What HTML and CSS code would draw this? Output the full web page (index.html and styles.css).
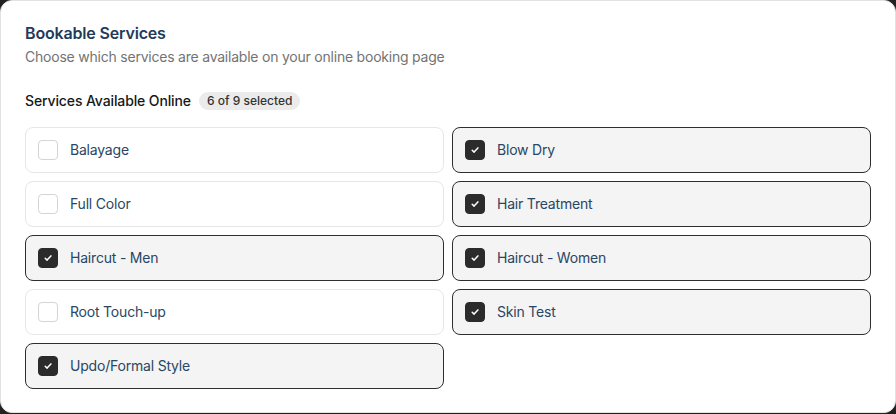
FILE: index.html
```html
<!DOCTYPE html>
<html lang="en">
<head>
<meta charset="utf-8">
<title>Bookable Services</title>
<link rel="stylesheet" href="styles.css">
</head>
<body>
<section class="card">
  <h2 class="title">Bookable Services</h2>
  <p class="subtitle">Choose which services are available on your online booking page</p>
  <div class="label-row">
    <span class="label">Services Available Online</span>
    <span class="badge">6 of 9 selected</span>
  </div>
  <div class="grid">
    <label class="item"><span class="box"></span><span class="name">Balayage</span></label>
    <label class="item on"><span class="box"><svg viewBox="0 0 12 12"><path d="M3.2 6.2l1.9 1.9 3.8-4.2"/></svg></span><span class="name">Blow Dry</span></label>
    <label class="item"><span class="box"></span><span class="name">Full Color</span></label>
    <label class="item on"><span class="box"><svg viewBox="0 0 12 12"><path d="M3.2 6.2l1.9 1.9 3.8-4.2"/></svg></span><span class="name">Hair Treatment</span></label>
    <label class="item on"><span class="box"><svg viewBox="0 0 12 12"><path d="M3.2 6.2l1.9 1.9 3.8-4.2"/></svg></span><span class="name">Haircut - Men</span></label>
    <label class="item on"><span class="box"><svg viewBox="0 0 12 12"><path d="M3.2 6.2l1.9 1.9 3.8-4.2"/></svg></span><span class="name">Haircut - Women</span></label>
    <label class="item"><span class="box"></span><span class="name">Root Touch-up</span></label>
    <label class="item on"><span class="box"><svg viewBox="0 0 12 12"><path d="M3.2 6.2l1.9 1.9 3.8-4.2"/></svg></span><span class="name">Skin Test</span></label>
    <label class="item on"><span class="box"><svg viewBox="0 0 12 12"><path d="M3.2 6.2l1.9 1.9 3.8-4.2"/></svg></span><span class="name">Updo/Formal Style</span></label>
  </div>
</section>
</body>
</html>
```
FILE: styles.css
```css
* { box-sizing: border-box; }
html, body { margin: 0; background: #222222; }
body { font-family: Inter, "Noto Sans", "Liberation Sans", sans-serif; }
.card {
  background: #ffffff;
  border: 1px solid #e2e2e2;
  border-radius: 12px;
  padding: 20px 24px 23px;
}
.title {
  margin: 0;
  font-size: 16px;
  line-height: 24px;
  font-weight: 600;
  letter-spacing: -0.17px;
  color: #1f3a5a;
}
.subtitle {
  margin: 2px 0 0;
  font-size: 14px;
  line-height: 20px;
  letter-spacing: -0.22px;
  color: #737373;
}
.label-row {
  margin-top: 24px;
  display: flex;
  align-items: center;
  gap: 8px;
  height: 20px;
}
.label {
  font-size: 14px;
  line-height: 20px;
  font-weight: 500;
  letter-spacing: -0.12px;
  color: #171717;
}
.badge {
  background: #ebebeb;
  color: #333333;
  font-size: 12px;
  line-height: 18px;
  font-weight: 500;
  padding: 0 8px;
  border-radius: 999px;
}
.grid {
  margin-top: 16px;
  display: grid;
  grid-template-columns: 1fr 1fr;
  gap: 8px;
}
.item {
  display: flex;
  align-items: center;
  gap: 12px;
  height: 46px;
  padding: 0 12px;
  border: 1px solid #e6e6e6;
  border-radius: 8px;
  background: #ffffff;
}
.item.on {
  border-color: #2e2e2e;
  background: #f4f4f4;
}
.box {
  width: 20px;
  height: 20px;
  flex: none;
  border: 1px solid #d4d4d8;
  border-radius: 4px;
  background: #ffffff;
  display: flex;
  align-items: center;
  justify-content: center;
}
.item.on .box {
  background: #2b2b2b;
  border-color: #2b2b2b;
}
.box svg {
  width: 12px;
  height: 12px;
  fill: none;
  stroke: #ffffff;
  stroke-width: 1.5;
  stroke-linecap: round;
  stroke-linejoin: round;
}
.name {
  font-size: 14px;
  line-height: 20px;
  letter-spacing: -0.2px;
  color: #2a4664;
}
```
